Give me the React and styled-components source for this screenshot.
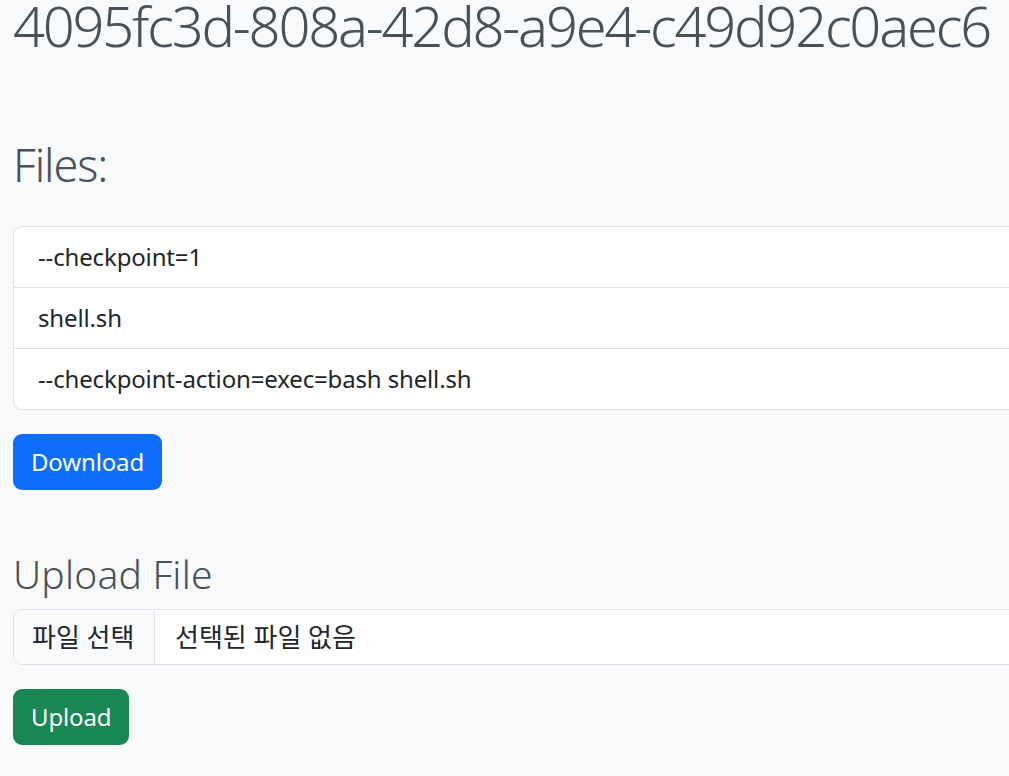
import React from "react";
import styled, { createGlobalStyle } from "styled-components";

const Global = createGlobalStyle`
  html, body { margin: 0; padding: 0; overflow: hidden; background: #f8f9fa; }
  body { font-family: "Noto Sans", "Noto Sans CJK KR", sans-serif; color: #212529; }
`;

const Page = styled.div`
  padding: 0 0 40px 13px;
  width: 1200px;
`;

const Title = styled.h1`
  margin: -11px 0 0;
  font-size: 56px;
  font-weight: 300;
  line-height: 72px;
  letter-spacing: -2.2px;
  color: #495057;
  white-space: nowrap;
`;

const SectionTitle = styled.h2`
  margin: ${(p) => p.$mt}px 0 0;
  font-size: ${(p) => p.$size}px;
  font-weight: 300;
  line-height: ${(p) => p.$lh}px;
  letter-spacing: ${(p) => p.$ls}px;
  color: #495057;
`;

const List = styled.ul`
  list-style: none;
  margin: 34px 0 0;
  padding: 0;
  border: 1px solid #dee2e6;
  border-radius: 9px;
  background: #fff;
  overflow: hidden;
`;

const Item = styled.li`
  padding: 12px 24px;
  font-size: 24px;
  line-height: 36px;
  letter-spacing: -0.15px;
  & + & { border-top: 1px solid #dee2e6; }
`;

const Button = styled.button`
  display: flex;
  align-items: center;
  margin-top: 24px;
  padding: 0 18px;
  height: 56px;
  border: 0;
  border-radius: 9px;
  background: ${(p) => p.$bg};
  color: #fff;
  font-family: inherit;
  font-size: 24px;
  line-height: 36px;
  letter-spacing: -0.15px;
`;

const FileInput = styled.div`
  display: flex;
  margin-top: 12px;
  height: 56px;
  box-sizing: border-box;
  border: 1px solid #dee2e6;
  border-radius: 9px;
  background: #fff;
  overflow: hidden;
  font-size: 26px;
  line-height: 36px;
`;

const FileButton = styled.div`
  display: flex;
  align-items: center;
  padding: 0 18px;
  width: 141px;
  box-sizing: border-box;
  background: #f8f9fa;
  border-right: 1px solid #dee2e6;
`;

const FileName = styled.div`
  display: flex;
  align-items: center;
  padding: 0 20px;
`;

export default function App() {
  return (
    <>
      <Global />
      <Page>
        <Title>4095fc3d-808a-42d8-a9e4-c49d92c0aec6</Title>
        <SectionTitle $size={45} $lh={54} $mt={77} $ls={-1.1}>Files:</SectionTitle>
        <List>
          <Item>--checkpoint=1</Item>
          <Item>shell.sh</Item>
          <Item>--checkpoint-action=exec=bash shell.sh</Item>
        </List>
        <Button $bg="#0d6efd">Download</Button>
        <SectionTitle $size={39} $lh={47} $mt={60} $ls={0.2}>Upload File</SectionTitle>
        <FileInput>
          <FileButton>파일 선택</FileButton>
          <FileName>선택된 파일 없음</FileName>
        </FileInput>
        <Button $bg="#198754">Upload</Button>
      </Page>
    </>
  );
}
